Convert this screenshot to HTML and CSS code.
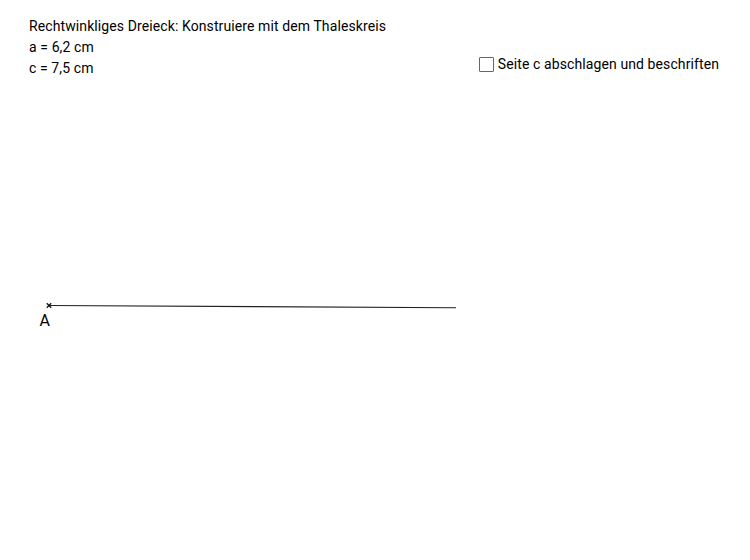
FILE: index.html
```html
<!DOCTYPE html>
<html lang="de">
<head>
<meta charset="utf-8">
<link rel="stylesheet" href="styles.css">
</head>
<body>
<div class="applet">
  <div class="top">
    <div class="info">
      <div class="line">Rechtwinkliges Dreieck: Konstruiere mit dem Thaleskreis</div>
      <div class="line">a = 6,2 cm</div>
      <div class="line">c = 7,5 cm</div>
    </div>
    <label class="check">
      <span class="box"></span>
      <span class="check-text">Seite c abschlagen und beschriften</span>
    </label>
  </div>
  <svg class="canvas" width="750" height="560" viewBox="0 0 750 560">
    <line x1="49" y1="305.5" x2="456" y2="307.8" stroke="#222" stroke-width="1.1"/>
    <path d="M46.8 303.3 L51.2 307.7 M51.2 303.3 L46.8 307.7" stroke="#111" stroke-width="1.3"/>
    <text x="39.5" y="326" class="label">A</text>
  </svg>
</div>
</body>
</html>
```

FILE: styles.css
```css
html, body {
  margin: 0;
  padding: 0;
  background: #fff;
}
.applet {
  position: relative;
  width: 750px;
  height: 560px;
  overflow: hidden;
  font-family: Roboto, "Liberation Sans", sans-serif;
  font-size: 14px;
  letter-spacing: 0.1px;
  color: #000;
}
.top {
  display: flex;
  justify-content: space-between;
  padding: 16px 31px 0 29px;
}
.info .line {
  height: 21px;
  line-height: 21px;
}
.check {
  display: flex;
  align-items: center;
  gap: 4px;
  margin-top: 40px;
  align-self: flex-start;
  height: 16px;
}
.box {
  width: 13px;
  height: 13px;
  border: 1px solid #666;
  border-radius: 1px;
  background: #fff;
}
.check-text {
  line-height: 16px;
}
.canvas {
  position: absolute;
  left: 0;
  top: 0;
}
.label {
  font-family: Roboto, "Liberation Sans", sans-serif;
  font-size: 16px;
  fill: #000;
}
```
